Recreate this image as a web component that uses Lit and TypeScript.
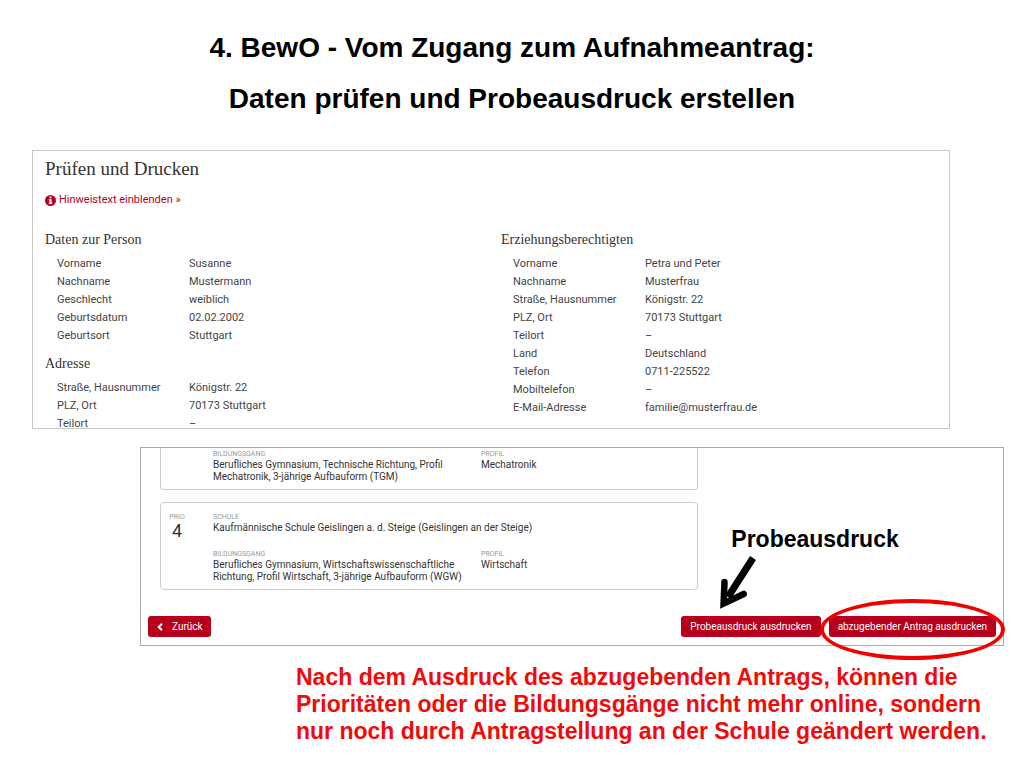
import { LitElement, html, css } from "lit";
import { customElement, property } from "lit/decorators.js";

type Row = [string, string];

interface Section {
  title: string;
  rows: Row[];
}

const LEFT: Section[] = [
  {
    title: "Daten zur Person",
    rows: [
      ["Vorname", "Susanne"],
      ["Nachname", "Mustermann"],
      ["Geschlecht", "weiblich"],
      ["Geburtsdatum", "02.02.2002"],
      ["Geburtsort", "Stuttgart"],
    ],
  },
  {
    title: "Adresse",
    rows: [
      ["Straße, Hausnummer", "Königstr. 22"],
      ["PLZ, Ort", "70173 Stuttgart"],
      ["Teilort", "–"],
    ],
  },
];

const RIGHT: Section[] = [
  {
    title: "Erziehungsberechtigten",
    rows: [
      ["Vorname", "Petra und Peter"],
      ["Nachname", "Musterfrau"],
      ["Straße, Hausnummer", "Königstr. 22"],
      ["PLZ, Ort", "70173 Stuttgart"],
      ["Teilort", "–"],
      ["Land", "Deutschland"],
      ["Telefon", "0711-225522"],
      ["Mobiltelefon", "–"],
      ["E-Mail-Adresse", "familie@musterfrau.de"],
    ],
  },
];

@customElement("data-section")
export class DataSection extends LitElement {
  @property({ attribute: false }) section!: Section;

  static styles = css`
    :host {
      display: block;
    }
    .title {
      margin: 0 0 5px;
      font: 400 14px/20px "Liberation Serif", serif;
      color: #333;
    }
    .rows {
      display: grid;
      grid-template-columns: 132px 1fr;
      margin: 0 0 0 12px;
      font-size: 11px;
      line-height: 18px;
      color: #444;
    }
    .label,
    .value {
      margin: 0;
    }
  `;

  render() {
    return html`
      <h3 class="title">${this.section.title}</h3>
      <dl class="rows">
        ${this.section.rows.map(
          ([label, value]) => html`<dt class="label">${label}</dt><dd class="value">${value}</dd>`
        )}
      </dl>
    `;
  }
}

@customElement("review-panel")
export class ReviewPanel extends LitElement {
  static styles = css`
    :host {
      display: block;
      border: 1px solid #c8c8c8;
      padding: 6px 12px 0;
    }
    .title {
      margin: 0;
      font: 400 19px/24px "Liberation Serif", serif;
      color: #333;
    }
    .hint {
      display: flex;
      width: fit-content;
      align-items: center;
      gap: 3px;
      margin-top: 9px;
      font-size: 11px;
      line-height: 20px;
      color: #b8001c;
      text-decoration: none;
    }
    .columns {
      display: grid;
      grid-template-columns: 1fr 1fr;
      gap: 20px;
      margin: 20px 0 -5px;
    }
    .column {
      display: flex;
      flex-direction: column;
      gap: 9px;
    }
  `;

  render() {
    return html`
      <h2 class="title">Prüfen und Drucken</h2>
      <a class="hint" href="#hinweis">
        <svg width="11" height="11" viewBox="0 0 11 11" aria-hidden="true">
          <circle cx="5.5" cy="5.5" r="5.5" fill="#b8001c" />
          <path d="M4.5 1.6h2v1.6h-2zM3.8 4.2h2.7v3.4h.8v1.3H3.8V7.600h.8V5.400h-.8z" fill="#fff" />
        </svg>
        <span>Hinweistext einblenden »</span>
      </a>
      <div class="columns">
        <div class="column">${LEFT.map((s) => html`<data-section .section=${s}></data-section>`)}</div>
        <div class="column">${RIGHT.map((s) => html`<data-section .section=${s}></data-section>`)}</div>
      </div>
    `;
  }
}

@customElement("print-panel")
export class PrintPanel extends LitElement {
  static styles = css`
    :host {
      display: block;
      border: 1px solid #aaa;
      padding: 0 7px 8px;
      font-size: 10px;
      line-height: 12px;
      color: #333;
    }
    .cards {
      display: flex;
      flex-direction: column;
      gap: 12px;
      width: 63.4%;
      margin-left: 12px;
    }
    .card {
      display: grid;
      grid-template-columns: 32px 248px 1fr;
      column-gap: 20px;
      row-gap: 15px;
      padding: 9px 8px 6px 0;
      border: 1px solid #ccc;
      border-radius: 4px;
    }
    .card.cut {
      border-top: 0;
      border-radius: 0 0 4px 4px;
      padding-top: 1px;
    }
    .prio {
      text-align: center;
      grid-column: 1;
      grid-row: 1 / 3;
    }
    .course {
      grid-column: 2;
      margin-right: -12px;
    }
    .school {
      grid-column: 2 / 4;
    }
    .caption {
      font-size: 7px;
      line-height: 10px;
      color: #999;
      text-transform: uppercase;
    }
    .rank {
      font-size: 18px;
      line-height: 18px;
    }
    .actions {
      display: flex;
      justify-content: flex-end;
      gap: 8px;
      margin-top: 26px;
    }
    .button {
      display: flex;
      align-items: center;
      gap: 8px;
      height: 21px;
      padding: 0 9px;
      border: 0;
      border-radius: 3px;
      background: #b8001c;
      color: #fff;
      font: inherit;
      white-space: nowrap;
    }
    .back {
      margin-right: auto;
      padding: 0 8px;
    }
    .marked {
      position: relative;
    }
    .oval {
      position: absolute;
      inset: -17px -9px -23px;
      border: 4px solid #f20000;
      border-radius: 50%;
      pointer-events: none;
    }
    .callout {
      position: absolute;
      left: 38px;
      bottom: 25px;
      font: 700 23px/26px "Liberation Sans", sans-serif;
      color: #000;
    }
    .arrow {
      display: block;
      margin-top: 4px;
    }
    .callout-text {
      display: block;
      margin-left: 12px;
    }
  `;

  render() {
    return html`
      <div class="cards">
        <article class="card cut">
          <div class="course">
            <div class="caption">Bildungsgang</div>
            Berufliches Gymnasium, Technische Richtung, Profil Mechatronik, 3-jährige Aufbauform (TGM)
          </div>
          <div>
            <div class="caption">Profil</div>
            Mechatronik
          </div>
        </article>
        <article class="card">
          <div class="prio">
            <div class="caption">Prio</div>
            <div class="rank">4</div>
          </div>
          <div class="school">
            <div class="caption">Schule</div>
            Kaufmännische Schule Geislingen a. d. Steige (Geislingen an der Steige)
          </div>
          <div class="course">
            <div class="caption">Bildungsgang</div>
            Berufliches Gymnasium, Wirtschaftswissenschaftliche Richtung, Profil Wirtschaft, 3-jährige Aufbauform (WGW)
          </div>
          <div>
            <div class="caption">Profil</div>
            Wirtschaft
          </div>
        </article>
      </div>
      <div class="actions">
        <button class="button back" type="button">
          <svg width="8" height="8" viewBox="0 0 8 8" aria-hidden="true">
            <path d="M6 .8 2.700 4 6 7.200" fill="none" stroke="#fff" stroke-width="2" />
          </svg>
          <span>Zurück</span>
        </button>
        <div class="marked">
          <button class="button" type="button">Probeausdruck ausdrucken</button>
          <div class="callout">
            <span class="callout-text">Probeausdruck</span>
            <svg class="arrow" width="40" height="56" viewBox="0 0 40 56" aria-hidden="true">
              <path d="M34 2 9 41" stroke="#000" stroke-width="7" fill="none" />
              <path d="M5.500 26 4.600 47.600 24.700 38" stroke="#000" stroke-width="6.5" stroke-linecap="round" stroke-linejoin="miter" fill="none" />
            </svg>
          </div>
        </div>
        <div class="marked">
          <button class="button" type="button">abzugebender Antrag ausdrucken</button>
          <div class="oval"></div>
        </div>
      </div>
    `;
  }
}

@customElement("app-root")
export class AppRoot extends LitElement {
  static styles = css`
    :host {
      display: block;
      padding: 22px 20px 20px 32px;
      background: #fff;
      font-family: Roboto, sans-serif;
    }
    .heading {
      margin: 0 12px 26px 0;
      font: 700 28px/51px "Liberation Sans", sans-serif;
      text-align: center;
      color: #000;
    }
    .line {
      display: block;
    }
    .review {
      margin-right: 54px;
    }
    .print {
      margin: 18px 0 0 108px;
    }
    .note {
      margin: 18px 0 0 264px;
      font: 700 23px/27px "Liberation Sans", sans-serif;
      color: #f00a0a;
    }
  `;

  render() {
    return html`
      <h1 class="heading">
        <span class="line">4. BewO - Vom Zugang zum Aufnahmeantrag:</span>
        <span class="line">Daten prüfen und Probeausdruck erstellen</span>
      </h1>
      <review-panel class="review"></review-panel>
      <print-panel class="print"></print-panel>
      <p class="note">
        Nach dem Ausdruck des abzugebenden Antrags, können die Prioritäten oder die Bildungsgänge
        nicht mehr online, sondern nur noch durch Antragstellung an der Schule geändert werden.
      </p>
    `;
  }
}
